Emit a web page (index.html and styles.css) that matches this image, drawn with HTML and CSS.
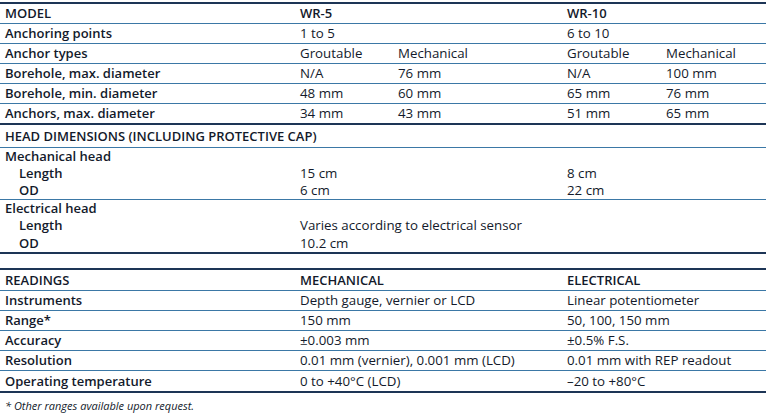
FILE: index.html
```html
<!DOCTYPE html>
<html>
<head>
<meta charset="utf-8">
<link rel="stylesheet" href="styles.css">
</head>
<body>
<div class="page">
  <table class="spec">
    <colgroup>
      <col class="c1"><col class="c2"><col class="c3"><col class="c4"><col class="c5">
    </colgroup>
    <tr class="row">
      <th>MODEL</th><th colspan="2">WR-5</th><th colspan="2">WR-10</th>
    </tr>
    <tr class="row">
      <th>Anchoring points</th><td colspan="2">1 to 5</td><td colspan="2">6 to 10</td>
    </tr>
    <tr class="row">
      <th>Anchor types</th><td>Groutable</td><td>Mechanical</td><td>Groutable</td><td>Mechanical</td>
    </tr>
    <tr class="row">
      <th>Borehole, max. diameter</th><td>N/A</td><td>76 mm</td><td>N/A</td><td>100 mm</td>
    </tr>
    <tr class="row">
      <th>Borehole, min. diameter</th><td>48 mm</td><td>60 mm</td><td>65 mm</td><td>76 mm</td>
    </tr>
    <tr class="row thick">
      <th>Anchors, max. diameter</th><td>34 mm</td><td>43 mm</td><td>51 mm</td><td>65 mm</td>
    </tr>
    <tr class="section">
      <th colspan="5">HEAD DIMENSIONS (INCLUDING PROTECTIVE CAP)</th>
    </tr>
    <tr class="sub">
      <th colspan="5">Mechanical head</th>
    </tr>
    <tr class="sub">
      <th class="indent">Length</th><td colspan="2">15 cm</td><td colspan="2">8 cm</td>
    </tr>
    <tr class="sub last">
      <th class="indent">OD</th><td colspan="2">6 cm</td><td colspan="2">22 cm</td>
    </tr>
    <tr class="sub">
      <th colspan="5">Electrical head</th>
    </tr>
    <tr class="sub">
      <th class="indent">Length</th><td colspan="4">Varies according to electrical sensor</td>
    </tr>
    <tr class="sub last thick tall">
      <th class="indent">OD</th><td colspan="2">10.2 cm</td><td colspan="2"></td>
    </tr>
  </table>

  <table class="spec readings">
    <colgroup>
      <col class="c1"><col class="c2"><col class="c3"><col class="c4"><col class="c5">
    </colgroup>
    <tr class="row head">
      <th>READINGS</th><th colspan="2">MECHANICAL</th><th colspan="2">ELECTRICAL</th>
    </tr>
    <tr class="row">
      <th>Instruments</th><td colspan="2">Depth gauge, vernier or LCD</td><td colspan="2">Linear potentiometer</td>
    </tr>
    <tr class="row">
      <th>Range*</th><td colspan="2">150 mm</td><td colspan="2">50, 100, 150 mm</td>
    </tr>
    <tr class="row">
      <th>Accuracy</th><td colspan="2">±0.003 mm</td><td colspan="2">±0.5% F.S.</td>
    </tr>
    <tr class="row">
      <th>Resolution</th><td colspan="2">0.01 mm (vernier), 0.001 mm (LCD)</td><td colspan="2">0.01 mm with REP readout</td>
    </tr>
    <tr class="row thick op">
      <th>Operating temperature</th><td colspan="2">0 to +40°C (LCD)</td><td colspan="2">–20 to +80°C</td>
    </tr>
  </table>

  <p class="note">* Other ranges available upon request.</p>
</div>
</body>
</html>
```

FILE: styles.css
```css
html, body {
  margin: 0;
  padding: 0;
  background: #ffffff;
}

body {
  font-family: "Open Sans", "Noto Sans", "Liberation Sans", sans-serif;
  color: #131a2b;
  font-size: 13px;
}

.page {
  width: 766px;
  padding-top: 2px;
}

.spec {
  width: 766px;
  border-collapse: collapse;
  table-layout: fixed;
  border-top: 2px solid #1d3556;
}

.c1 { width: 295px; }
.c2 { width: 98px; }
.c3 { width: 169px; }
.c4 { width: 99px; }
.c5 { width: 105px; }

.spec th,
.spec td {
  padding: 0 0 0 5px;
  text-align: left;
  vertical-align: middle;
  white-space: nowrap;
  overflow: visible;
}

.spec th {
  font-weight: 600;
}

.spec td {
  font-weight: 400;
  font-size: 13.3px;
}

.row th,
.row td {
  height: 19px;
  line-height: 19px;
  border-bottom: 1px solid #3b78a6;
}

.row.thick th,
.row.thick td {
  border-bottom: 2px solid #1d3556;
}

.row.head th {
  height: 20px;
}

.row.op th,
.row.op td {
  height: 20px;
}

.section th {
  height: 22px;
  line-height: 22px;
  border-bottom: 1px solid #3b78a6;
}

.sub th,
.sub td {
  height: 17px;
  line-height: 17px;
  border-bottom: none;
}

.sub.last th,
.sub.last td {
  border-bottom: 1px solid #3b78a6;
}

.sub.last.thick th,
.sub.last.thick td {
  border-bottom: 2px solid #1d3556;
}

.sub.tall th,
.sub.tall td {
  height: 18px;
}

.spec th.indent {
  padding-left: 19px;
}

.readings {
  margin-top: 14px;
}

.note {
  margin: 6px 0 0 0;
  padding-left: 5px;
  font-size: 11px;
  font-style: italic;
  line-height: 14px;
}
```
